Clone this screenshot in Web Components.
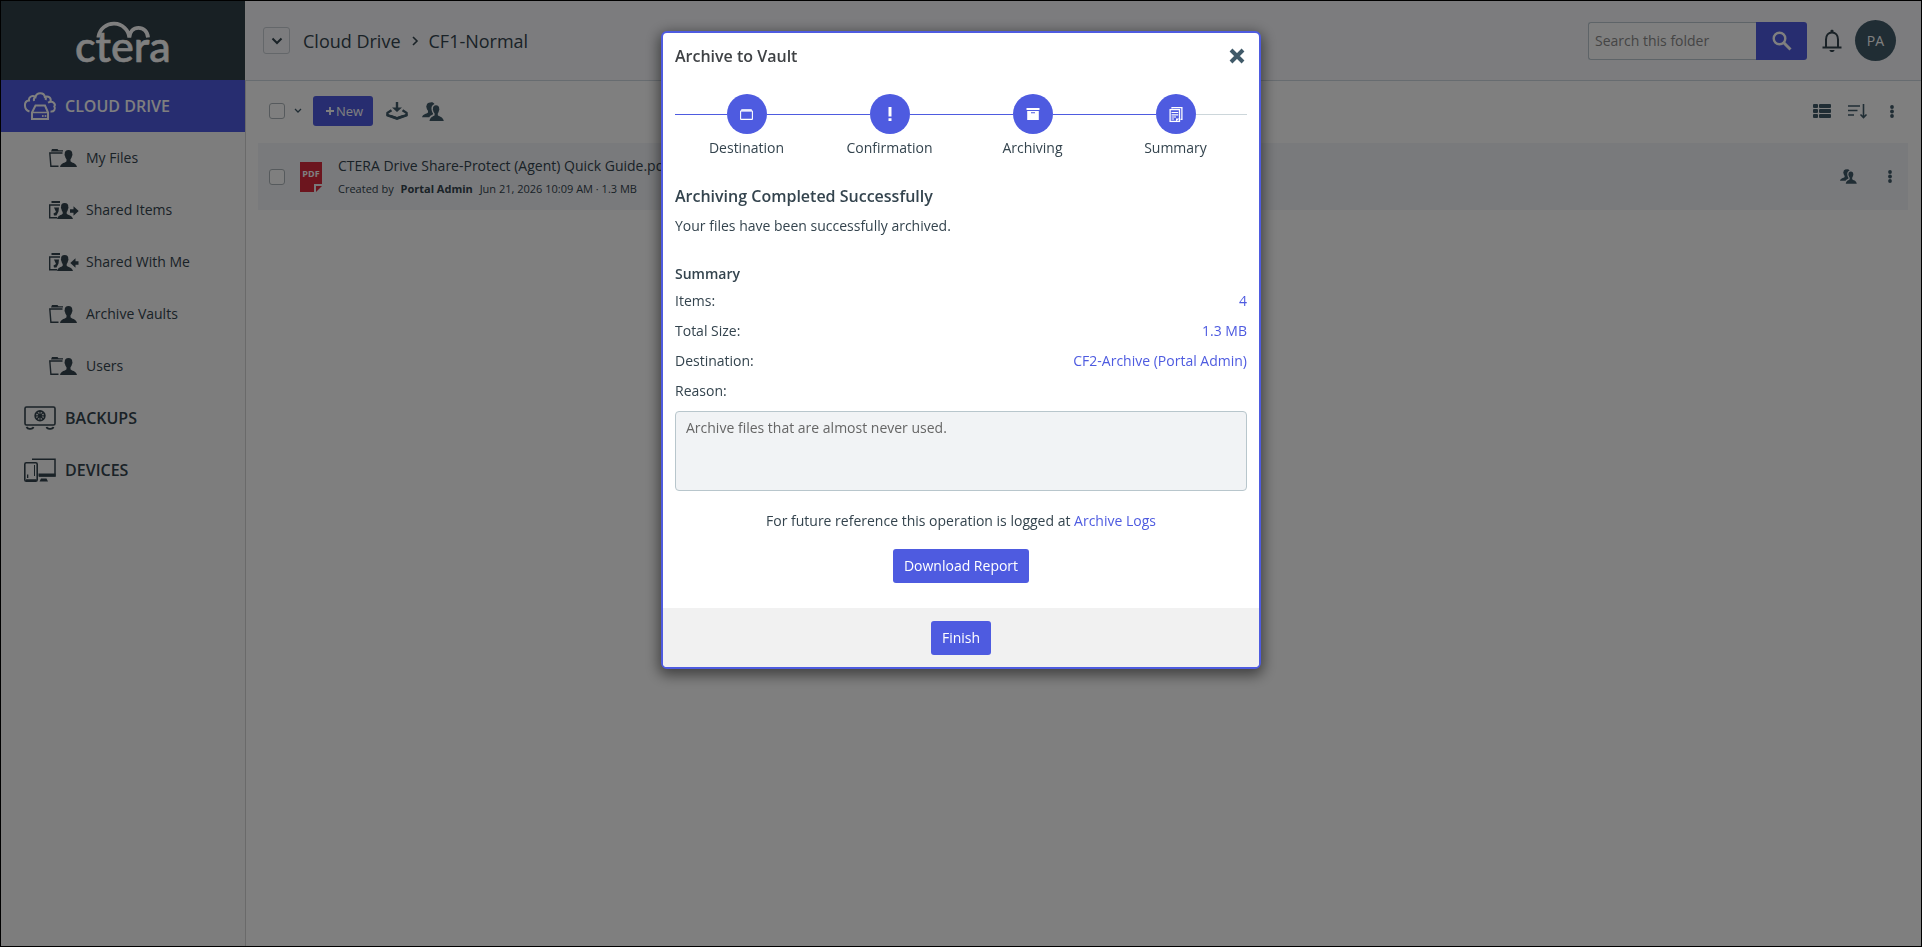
<!DOCTYPE html>
<html lang="en">
<head>
<meta charset="utf-8">
<title>CTERA - Cloud Drive</title>
<style>
  html, body { margin: 0; min-height: 100%; }
  body {
    --accent: #4e5be0;
    --ink: #34444e;
    --icon: #405a69;
    font-family: "Open Sans", "Noto Sans", sans-serif;
    font-size: 14px;
    line-height: 20px;
    color: var(--ink);
    background: #fff;
  }
</style>
</head>
<body>
<vault-app></vault-app>

<script>
const define = (name, html, setup) => customElements.define(name, class extends HTMLElement {
  constructor() {
    super();
    const t = document.createElement('template');
    t.innerHTML = '<style>*{box-sizing:border-box}</style>' + html;
    this.attachShadow({ mode: 'open' }).append(t.content.cloneNode(true));
  }
  connectedCallback() { if (setup) setup(this, this.shadowRoot); }
});

/* ---------- icons: [width, height, markup] ---------- */
const person = (x, y) => `<path transform="translate(${x} ${y})" d="M8.500 0C11 0 12.400 1.500 12.300 4C12.600 4.200 12.500 5.600 12 5.900C11.700 7.600 11 8.600 10.500 9.300V11.300C11.500 13 16 12.600 17 17H0C1 12.600 5.500 13 6.500 11.300V9.300C6 8.600 5.300 7.600 5 5.900C4.500 5.600 4.400 4.200 4.700 4C4.600 1.500 6 0 8.500 0Z"/>`;
const share = `<path d="M8.500 0.500C10 0 11.500 .500 12.500 2C10 3 9 5 9.600 8C9.800 9.500 10.500 10.500 11 11.300V12.300C9.500 13.300 8 13.500 7.300 15.300H0C.800 12 4.500 12 6 10.500V8.800C5 7.800 4.800 6.600 4.500 5.400C4 4.600 4.400 3.800 4.600 3.500C4.800 1.500 6.500 .300 8.500 .500Z"/><path d="M14 3.300C16.200 3.300 17.300 4.800 17.200 6.800C17.500 7 17.400 8.200 17 8.500C16.800 9.800 16.300 10.800 15.800 11.400V13.200C17 14.600 21 14.500 21.800 19H7.500C8.200 14.500 11.500 14.600 12.600 13.200V11.400C12 10.800 11.400 9.800 11.200 8.500C10.800 8.200 10.700 7 11 6.800C10.800 4.800 12 3.300 14 3.300Z"/>`;
const sharedFolder = `<path d="M2.500 1H11" stroke="currentColor" stroke-width="2"/><path d="M11 4H.700V16.800H8" fill="none" stroke="currentColor" stroke-width="1.400"/><path d="M5 6.500H10L9.500 10.500L7.500 14.500H5L4.500 12.500L7 11Z"/>` +
  `<path d="M15.700 2C18.300 2 19.500 3.600 19.300 6C19.600 6.300 19.500 7.500 19 7.800C18.800 9.500 18.200 10.500 17.700 11V12.800C19 14.400 23 14 24 18H8C9 14 12.400 14.400 13.700 12.800V11C13.200 10.500 12.600 9.500 12.400 7.800C11.900 7.500 11.800 6.300 12.100 6C11.900 3.600 13 2 15.700 2Z"/>`;
const ICONS = {
  cloud: [32, 28, `<g fill="none" stroke="currentColor" stroke-width="2"><path d="M5.500 19.500C-.500 17.500-.500 9 5 8.500C4.500 5 8.500 2.500 11.500 5C12.500 0 20 0 20.800 4.800C24.500 3.500 27.500 6 26.500 9.500"/><path d="M10 9C9.500 7 10.200 5.600 11.500 4.800M20.800 4.800C22 5.500 22 7 21.500 8M24 10.700C29 8 32 12 30.300 14.500C32 17 30 20 26.500 19.500"/><path d="M11.500 13.500H21L24 20.500V27H8V20.500Z"/></g><path d="M8 20.500H24" stroke="currentColor" stroke-width="1.500"/><circle cx="18.800" cy="24" r="1"/><circle cx="21.500" cy="24" r="1"/>`],
  folder: [28, 18, `<path d="M2 2.500L3 0H8.500L9.500 1.200H14V2.500Z"/><path d="M13.500 4H.800L1.900 17.200H9.500" fill="none" stroke="currentColor" stroke-width="1.400"/>` + person(11, 1)],
  sharedOut: [30, 18, sharedFolder + `<path d="M21 8.300H24.500V5.200L29.700 10L24.500 14.800V11.700H21Z"/>`],
  sharedIn: [30, 18, sharedFolder + `<path d="M29.500 8.300H26.500V5.200L21.300 10L26.500 14.800V11.700H29.500Z"/>`],
  backup: [32, 24, `<rect x="1" y="1" width="30" height="18" rx="1.500" fill="none" stroke="currentColor" stroke-width="1.600"/><circle cx="16" cy="9.800" r="4.800" fill="none" stroke="currentColor" stroke-width="1.800"/><path d="M16 5V14.600M11.200 9.800H20.800M12.600 6.400L19.400 13.200M19.400 6.400L12.600 13.200" stroke="currentColor" stroke-width="1.300"/><circle cx="16" cy="9.800" r="1.800"/><path d="M2.500 21C3.500 23 4.500 22.800 6 22.800C8 22.800 9 23 9.500 21M22.500 21C23 23 24.500 22.800 26 22.800C28 22.800 29 23 29.500 21" fill="none" stroke="currentColor" stroke-width="1.700"/>`],
  device: [32, 24, `<path d="M8 1.200H31V18H15" fill="none" stroke="currentColor" stroke-width="1.500"/><path d="M14.500 15.500H31.500V18.500H14.500Z"/><rect x=".800" y="4.800" width="12.400" height="18.400" rx="1.500" fill="none" stroke="currentColor" stroke-width="1.600"/><path d="M2 21.300H12.500V23H2ZM17 20.500H22.500L24 23.500H15.500ZM3 16.500H4.300V20H3ZM10 7H11V18H10Z"/>`],
  chevron: [12, 8, `<path d="M1.500 1.500L6 6L10.500 1.500" fill="none" stroke="currentColor" stroke-width="2"/>`],
  chevronSmall: [8, 6, `<path d="M1 1L4 4L7 1" fill="none" stroke="currentColor" stroke-width="1.300"/>`],
  crumb: [6, 10, `<path d="M1 1L5 5L1 9" fill="none" stroke="currentColor" stroke-width="1.600"/>`],
  plus: [8, 8, `<path d="M4 0V8M0 4H8" stroke="currentColor" stroke-width="1.800"/>`],
  download: [22, 18, `<path d="M9.800 0H12.200V5.500H16L11 10L6 5.500H9.800Z"/><path d="M5.500 8.200L1.500 10.800V13L11 16.300L20.500 13V10.800L16.500 8.200" fill="none" stroke="currentColor" stroke-width="2.400"/><path d="M.500 11.500L11 15L21.500 11.500V14.200L11 18L.500 14.200Z"/>`],
  share: [22, 19, share],
  shareSmall: [17, 15, `<g transform="scale(.77)">${share}</g>`],
  search: [20, 20, `<circle cx="7.500" cy="7.500" r="5.800" fill="none" stroke="currentColor" stroke-width="2.400"/><path d="M11.800 11.800L18.500 18.500" stroke="currentColor" stroke-width="3"/>`],
  bell: [20, 23, `<path d="M4 18V10.500C4 6.500 6.500 3.500 10 3.500C13.500 3.500 16 6.500 16 10.500V18" fill="none" stroke="currentColor" stroke-width="2"/><path d="M8.500 4V1.500C8.500 .500 11.500 .500 11.500 1.500V4ZM.500 17.500H19.500V19.500H.500ZM7.500 21H12.500C12.500 23.700 7.500 23.700 7.500 21Z"/>`],
  list: [18, 15, `<rect y="0" width="5" height="4" rx="1"/><rect x="6" width="12" height="4" rx="1"/><rect y="5" width="5" height="4" rx="1"/><rect x="6" y="5" width="12" height="4" rx="1"/><rect y="10" width="5" height="4" rx="1"/><rect x="6" y="10" width="12" height="4" rx="1"/>`],
  sort: [19, 15, `<path d="M0 2H12M0 6.500H9.500M0 11H6" stroke="currentColor" stroke-width="1.700"/><path d="M15.500 0V13M12.500 10.500L15.500 13.500L18.500 10.500" fill="none" stroke="currentColor" stroke-width="1.600"/>`],
  dots: [4, 13, `<circle cx="2" cy="2" r="1.900"/><circle cx="2" cy="6.500" r="1.900"/><circle cx="2" cy="11" r="1.900"/>`],
  close: [16, 16, `<path d="M2 2L14 14M14 2L2 14" stroke="currentColor" stroke-width="4"/>`],
  stepFolder: [13, 11, `<path d="M.500 2.300L1.500 0H11.500L12.500 2.300Z" opacity=".8"/><rect x=".600" y="2" width="11.800" height="8.400" rx=".500" fill="none" stroke="currentColor" stroke-width="1.100"/>`],
  stepAlert: [4, 14, `<path d="M.500 0H3.500V9.500H.500ZM.500 11.300H3.500V14H.500Z"/>`],
  stepBox: [14, 12, `<path fill-rule="evenodd" d="M.500 0H13.500V2H.500ZM1.200 3H12.800V12H1.200ZM5 4.300V5.300H9V4.300Z"/>`],
  stepDocs: [14, 15, `<path d="M3 1.500V.700H12.900V12.300H11.500" fill="none" stroke="currentColor" stroke-width="1.300"/><rect x="1.100" y="2.600" width="9.400" height="11.800" fill="none" stroke="currentColor" stroke-width="1.300"/><path d="M2.500 5.500H9.200M2.500 7.800H9.200M2.500 10H7M2.500 12H5" stroke="currentColor" stroke-width="1.200"/><path d="M7 14.500V11.500H10.500Z"/>`]
};
define('ct-icon', `<style>:host{display:inline-flex;flex:none}svg{display:block;fill:currentColor;overflow:visible}</style><span></span>`,
  (el, root) => {
    const [w, h, body] = ICONS[el.getAttribute('name')];
    root.querySelector('span').innerHTML = `<svg width="${w}" height="${h}" viewBox="0 0 ${w} ${h}" aria-hidden="true">${body}</svg>`;
  });

define('ct-button', `
  <style>
    :host { display: inline-flex; }
    button { display: flex; align-items: center; gap: 2px; height: 34px; padding: 0 11px; border: 0; border-radius: 3px;
      background: var(--accent); color: #fff; font: inherit; font-weight: 500; cursor: pointer; }
    :host([compact]) button { height: 30px; padding: 0 10px 0 13px; font-size: 13px; font-weight: 400; }
  </style>
  <button type="button"><slot></slot></button>`);

define('ct-check', `
  <style>
    :host { display: flex; }
    input { appearance: none; width: 16px; height: 16px; margin: 0; border: 1px solid #adb5ba; border-radius: 3px; background: #fff; }
  </style>
  <input type="checkbox">`,
  (el, root) => root.querySelector('input').setAttribute('aria-label', el.getAttribute('label')));

define('ct-tool', `
  <style>
    :host { display: flex; }
    button { display: flex; padding: 0; border: 0; background: none; color: inherit; }
  </style>
  <button type="button"></button>`,
  (el, root) => {
    const button = root.querySelector('button');
    button.setAttribute('aria-label', el.getAttribute('label'));
    button.innerHTML = `<ct-icon name="${el.getAttribute('icon')}"></ct-icon>`;
  });

define('nav-item', `
  <style>
    :host { display: block; }
    a { display: flex; align-items: center; height: 52px; padding-left: 48px; color: inherit; text-decoration: none; }
    .pic { display: flex; align-items: center; width: 37px; }
    :host([top]) a { padding-left: 23px; font-size: 16px; font-weight: 600; }
    :host([top]) .pic { width: 41px; }
    :host([current]) a { background: var(--accent); color: #fff; }
  </style>
  <a href="#"><span class="pic"><slot name="icon"></slot></span><slot></slot></a>`);

define('side-bar', `
  <style>
    :host { display: flex; flex-direction: column; width: 245px; flex: none; background: #fafafa; }
    .logo { display: block; height: 79px; background: #304049; margin-right: 1px; }
    svg { display: block; }
    nav { flex: 1; border-right: 1px solid #d5d5d5; }
  </style>
  <a class="logo" href="#" aria-label="CTERA home">
    <svg width="244" height="79" viewBox="1 1 244 79">
      <path d="M98.500 37.500V36.500A15.500 15 0 0 1 129.300 37.500C129.800 31.500 133.500 27.800 138.500 27.800C143.500 27.800 147.600 31.500 148 37.500" fill="none" stroke="#fff" stroke-width="3.800"/>
      <text x="75" y="62" font-family="Lato, sans-serif" font-size="43" font-weight="500" fill="#fff" stroke="#fff" stroke-width=".600">ctera</text>
    </svg>
  </a>
  <nav>
    <nav-item top current><ct-icon slot="icon" name="cloud"></ct-icon>CLOUD DRIVE</nav-item>
    <nav-item><ct-icon slot="icon" name="folder"></ct-icon>My Files</nav-item>
    <nav-item><ct-icon slot="icon" name="sharedOut"></ct-icon>Shared Items</nav-item>
    <nav-item><ct-icon slot="icon" name="sharedIn"></ct-icon>Shared With Me</nav-item>
    <nav-item><ct-icon slot="icon" name="folder"></ct-icon>Archive Vaults</nav-item>
    <nav-item><ct-icon slot="icon" name="folder"></ct-icon>Users</nav-item>
    <nav-item top><ct-icon slot="icon" name="backup"></ct-icon>BACKUPS</nav-item>
    <nav-item top><ct-icon slot="icon" name="device"></ct-icon>DEVICES</nav-item>
  </nav>`);

define('top-bar', `
  <style>
    :host { display: flex; align-items: center; height: 80px; padding: 0 25px 0 17px; background: #f8f9fc; border-bottom: 1px solid #cfd8e0; }
    .drop { display: grid; place-items: center; width: 27px; height: 27px; padding: 0; border: 1px solid #c9ced4; border-radius: 3px; background: none; color: inherit; }
    nav { display: flex; align-items: center; gap: 11px; margin-left: 13px; font-size: 18px; line-height: 24px; flex: 1; }
    a { color: inherit; text-decoration: none; }
    form { display: flex; height: 38px; }
    input { width: 168px; padding: 0 6px; border: 1px solid #bcc8d0; border-right: 0; border-radius: 3px 0 0 3px; background: #fff; font: inherit; color: inherit; }
    input::placeholder { color: #8a8a8a; opacity: 1; }
    form button { display: grid; place-items: center; width: 51px; border: 0; padding: 0; border-radius: 0 3px 3px 0; background: var(--accent); color: #fff; }
    .bell { margin: 0 13px 0 15px; }
    .avatar { width: 41px; height: 41px; padding: 0; border: 0; border-radius: 50%; background: #405a69; color: #fff; font: inherit; }
  </style>
  <button class="drop" type="button" aria-label="Folder tree"><ct-icon name="chevron"></ct-icon></button>
  <nav aria-label="Breadcrumb"><a href="#">Cloud Drive</a><ct-icon name="crumb"></ct-icon><a href="#">CF1-Normal</a></nav>
  <form role="search">
    <input type="search" placeholder="Search this folder" aria-label="Search this folder">
    <button type="button" aria-label="Search"><ct-icon name="search"></ct-icon></button>
  </form>
  <ct-tool class="bell" icon="bell" label="Notifications"></ct-tool>
  <button class="avatar" type="button" aria-label="Account">PA</button>`);

define('tool-bar', `
  <style>
    :host { display: flex; align-items: center; height: 60px; margin-bottom: 2px; padding: 0 27px 0 23px; color: var(--icon); }
    .arrow { margin: 0 11px 0 9px; }
    .dl { margin: 0 14px 0 13px; }
    .right { display: flex; align-items: center; gap: 17px; margin-left: auto; }
    .more { margin-left: 6px; }
  </style>
  <ct-check label="Select all"></ct-check>
  <ct-tool class="arrow" icon="chevronSmall" label="Selection options"></ct-tool>
  <ct-button compact><ct-icon name="plus"></ct-icon>New</ct-button>
  <ct-tool class="dl" icon="download" label="Download"></ct-tool>
  <ct-tool icon="share" label="Share"></ct-tool>
  <div class="right">
    <ct-tool icon="list" label="View"></ct-tool>
    <ct-tool icon="sort" label="Sort"></ct-tool>
    <ct-tool class="more" icon="dots" label="More"></ct-tool>
  </div>`);

define('file-row', `
  <style>
    :host { display: flex; align-items: center; height: 67px; margin: 0 13px 0 12px; padding: 0 16px 0 11px; background: #f3f5f9; }
    .pdf { flex: none; margin: 0 16px 0 15px; }
    .text { flex: 1; min-width: 0; }
    .name { color: inherit; text-decoration: none; display: block; line-height: 24px; }
    .meta { font-size: 11px; line-height: 22px; white-space: nowrap; }
    .tools { display: flex; align-items: center; gap: 31px; color: var(--icon); }
  </style>
  <ct-check label="Select file"></ct-check>
  <svg class="pdf" width="22" height="30" viewBox="0 0 22 30">
    <path d="M0 0H22V22H14V30H0Z" fill="#d82a3c"/><path d="M16 24H22L16 30Z" fill="#d82a3c"/>
    <text x="11" y="15" text-anchor="middle" font-size="9" font-weight="700" fill="#fff" font-family="Open Sans, sans-serif">PDF</text>
  </svg>
  <div class="text">
    <a class="name" href="#"><slot></slot></a>
    <div class="meta"><slot name="meta"></slot></div>
  </div>
  <div class="tools">
    <ct-tool icon="shareSmall" label="Share"></ct-tool>
    <ct-tool icon="dots" label="More"></ct-tool>
  </div>`);

define('wizard-step', `
  <style>
    :host { display: flex; flex-direction: column; align-items: center; flex: 1; gap: 4px; }
    .track { display: flex; align-items: center; align-self: stretch; }
    i { flex: 1; height: 1px; background: var(--accent); }
    :host([last]) i:last-child { background: #ccd6da; }
    .dot { display: grid; place-items: center; width: 40px; height: 40px; border-radius: 50%; background: var(--accent); color: #fff; }
  </style>
  <div class="track"><i></i><span class="dot"><slot name="icon"></slot></span><i></i></div>
  <span><slot></slot></span>`);

define('summary-line', `
  <style>
    :host { display: flex; justify-content: space-between; line-height: 30px; }
    span + span { color: var(--accent); }
  </style>
  <span><slot></slot></span><span><slot name="value"></slot></span>`);

define('archive-dialog', `
  <style>
    :host { display: block; width: 600px; max-width: 100%; border: 2px solid var(--accent); border-radius: 6px; background: #fff;
      box-shadow: 0 4px 14px 2px rgba(0, 0, 0, .5); overflow: hidden; }
    header { display: flex; align-items: center; justify-content: space-between; padding: 11px 12px 0; height: 34px; color: #3f4245; }
    h1, h2, h3, p { margin: 0; }
    h1 { font-size: 16px; font-weight: 600; line-height: 24px; }
    ct-tool { color: var(--icon); margin-right: 2px; }
    .steps { display: flex; margin-top: 27px; }
    .body { padding: 0 12px; }
    h2 { font-size: 16px; line-height: 24px; font-weight: 600; margin-top: 26px; }
    .body p { margin-top: 8px; }
    h3 { font-size: 14px; line-height: 20px; font-weight: 600; margin: 28px 0 2px; }
    label { display: block; line-height: 30px; }
    textarea { display: block; width: 100%; height: 80px; margin: 5px 0 20px; padding: 6px 10px; border: 1px solid #b8c6cc; border-radius: 4px;
      background: #f1f3f5; color: #666; font: inherit; resize: none; }
    .note { text-align: center; }
    a { color: var(--accent); text-decoration: none; }
    .center { display: flex; justify-content: center; padding: 18px 0 25px; }
    footer { display: flex; justify-content: center; padding: 13px 0 12px; background: #f1f1f1; }
  </style>
  <header><h1>Archive to Vault</h1><ct-tool icon="close" label="Close"></ct-tool></header>
  <div class="body">
    <div class="steps">
      <wizard-step><ct-icon slot="icon" name="stepFolder"></ct-icon>Destination</wizard-step>
      <wizard-step><ct-icon slot="icon" name="stepAlert"></ct-icon>Confirmation</wizard-step>
      <wizard-step><ct-icon slot="icon" name="stepBox"></ct-icon>Archiving</wizard-step>
      <wizard-step last><ct-icon slot="icon" name="stepDocs"></ct-icon>Summary</wizard-step>
    </div>
    <h2>Archiving Completed Successfully</h2>
    <p>Your files have been successfully archived.</p>
    <h3>Summary</h3>
    <summary-line>Items:<span slot="value">4</span></summary-line>
    <summary-line>Total Size:<span slot="value">1.3 MB</span></summary-line>
    <summary-line>Destination:<span slot="value">CF2-Archive (Portal Admin)</span></summary-line>
    <label for="reason">Reason:</label>
    <textarea id="reason" readonly>Archive files that are almost never used.</textarea>
    <div class="note">For future reference this operation is logged at <a href="#">Archive Logs</a></div>
    <div class="center"><ct-button>Download Report</ct-button></div>
  </div>
  <footer><ct-button>Finish</ct-button></footer>`);

define('vault-app', `
  <style>
    :host { display: flex; box-sizing: border-box; min-height: 100vh; border: 1px solid #000; }
    main { flex: 1; min-width: 0; }
    b { margin: 0 4px; }
    .overlay { position: fixed; inset: 0; display: flex; justify-content: center; align-items: flex-start; padding-top: 31px; background: rgba(0, 0, 0, .5); }
  </style>
  <side-bar></side-bar>
  <main>
    <top-bar></top-bar>
    <tool-bar></tool-bar>
    <file-row>CTERA Drive Share-Protect (Agent) Quick Guide.pdf
      <span slot="meta">Created by <b>Portal Admin</b> Jun 21, 2026 10:09 AM · 1.3 MB</span>
    </file-row>
  </main>
  <div class="overlay"><archive-dialog role="dialog" aria-modal="true" aria-label="Archive to Vault"></archive-dialog></div>`);
</script>
</body>
</html>
